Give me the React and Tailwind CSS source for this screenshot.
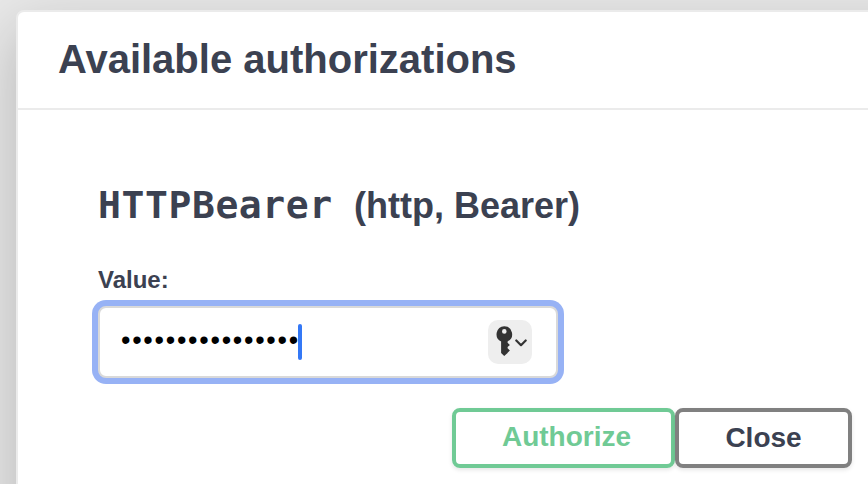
const sans = 'font-["Liberation_Sans",Arial,sans-serif]';

function KeyIcon() {
  return (
    <svg width="18" height="30" viewBox="0 0 18 30" fill="#333333">
      <path
        fillRule="evenodd"
        d="M8.3.2a8 8 0 0 1 3.3 15.2v1.4l2.300 2.100-2.300 2.200v1.200l2.300 2.100-2.300 2.300v.4L8.200 30 5.100 27.100V15.400A8 8 0 0 1 8.300.2Zm0 2.900a2.300 2.300 0 1 0 0 4.600 2.300 2.300 0 0 0 0-4.600Z"
      />
    </svg>
  );
}

function ChevronIcon() {
  return (
    <svg width="12" height="8" viewBox="0 0 12 8" fill="none" stroke="#333333" strokeWidth="2.200" strokeLinecap="round" strokeLinejoin="round">
      <path d="M1.300 1.500 6 6.200l4.700-4.700" />
    </svg>
  );
}

export default function App() {
  return (
    <div className={`h-[484px] w-[868px] overflow-hidden bg-[#e8e8e8] pl-4 pt-[10px] text-[#3b4151] ${sans}`}>
      <section className="h-[600px] w-[1000px] rounded-lg border-2 border-[#ebebeb] bg-white shadow-[0_20px_60px_0_rgba(0,0,0,0.22)]">
        <header className="h-[98px] border-b-2 border-[#ebebeb] pl-[40px] pt-[24px]">
          <h3 className="text-[40px] font-bold leading-[46px]">Available authorizations</h3>
        </header>
        <div className="w-[834px] pl-[80px] pt-[72px]">
          <h4 className="flex h-[46px] items-baseline whitespace-pre text-[36px] font-bold leading-[46px]">
            <code className='w-[256px] font-["DejaVu_Sans_Mono",monospace] text-[38px] tracking-[0.6px]'>HTTPBearer</code>
            <span>(http, Bearer)</span>
          </h4>
          <label className="mt-[38px] block text-[24px] font-bold leading-[28px]">Value:</label>
          <div className="mt-[12px] flex h-[72px] w-[460px] items-center rounded-lg border-2 border-[#d9d9d9] bg-white pl-[21px] pr-[24px] shadow-[0_0_0_6px_#97b2f5]">
            <span className="mb-[4px] w-[177px] whitespace-nowrap text-[27px] leading-[36px] tracking-[1.730px] text-black">••••••••••••••••</span>
            <span className="h-[36px] w-1 rounded-sm bg-[#3478f6]" />
            <span className="ml-auto flex h-[44px] w-[44px] items-center rounded-[10px] bg-[#eeeeee] pl-2">
              <span className="mb-[2px]">
                <KeyIcon />
              </span>
              <span className="ml-[1px] mt-[2px]">
                <ChevronIcon />
              </span>
            </span>
          </div>
          <div className="mt-[30px] flex justify-end">
            <button className="h-[60px] w-[223px] rounded-lg border-4 border-[#70ca95] pb-[3px] pl-[6px] text-[28px] font-bold leading-[32px] text-[#70ca95] shadow-[0_2px_4px_rgba(0,0,0,0.1)]">
              Authorize
            </button>
            <button className="h-[60px] w-[177px] rounded-lg border-4 border-[#808080] text-[28px] font-bold leading-[32px] shadow-[0_2px_4px_rgba(0,0,0,0.1)]">
              Close
            </button>
          </div>
        </div>
      </section>
    </div>
  );
}
